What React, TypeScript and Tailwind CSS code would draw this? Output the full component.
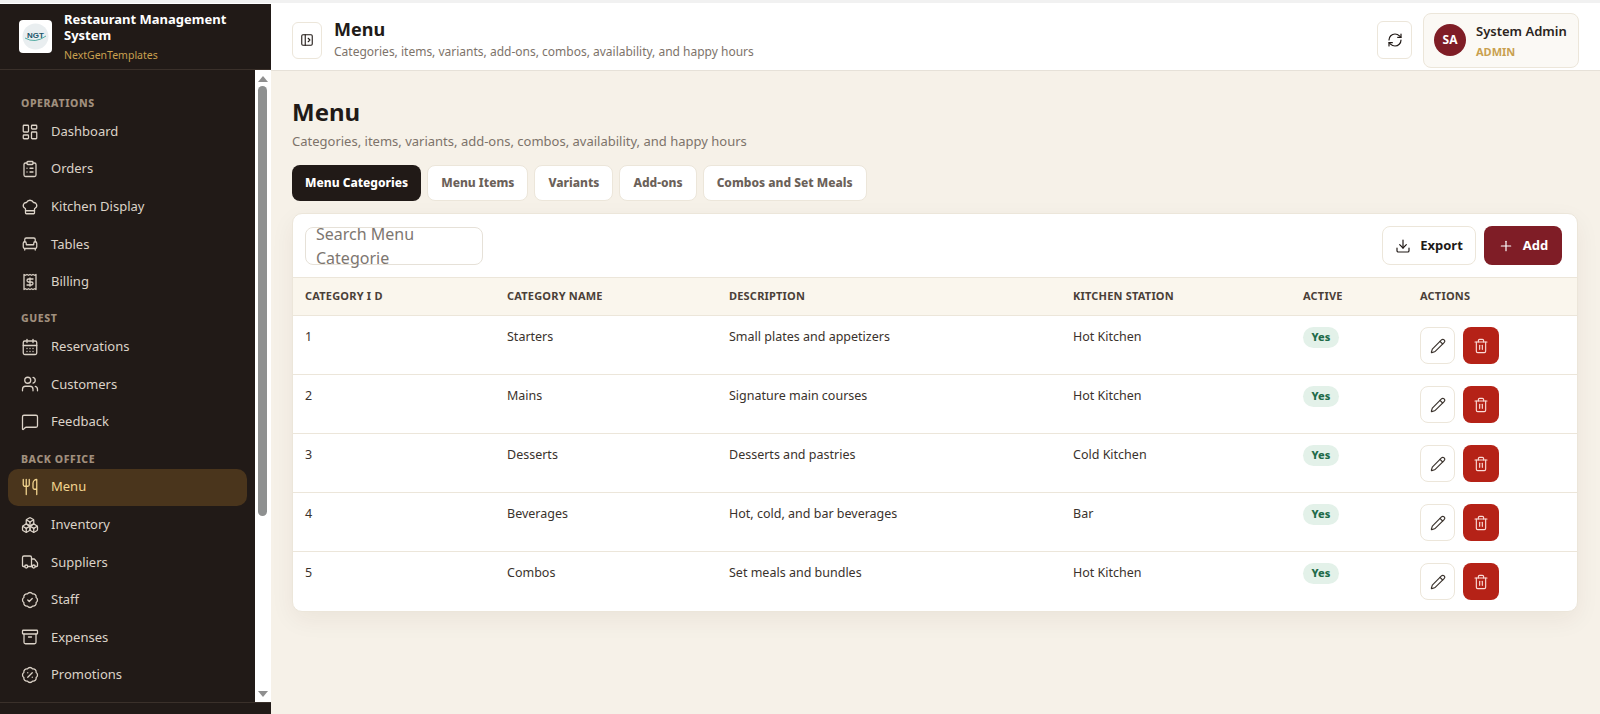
import React from "react";
import { LayoutDashboard, ClipboardList, ChefHat, Armchair, Receipt, CalendarDays, Users, MessageSquare, Utensils, Boxes, Truck, BadgeCheck, Archive, BadgePercent, PanelLeftOpen, RefreshCw, Download, Plus, Pencil, Trash2 } from "lucide-react";

const ic = "w-[18px] h-[18px] shrink-0";
type Item = { label: string; Icon: React.ComponentType<any>; active?: boolean };
const groups: { title: string; items: Item[] }[] = [
  { title: "OPERATIONS", items: [
    { label: "Dashboard", Icon: LayoutDashboard },
    { label: "Orders", Icon: ClipboardList },
    { label: "Kitchen Display", Icon: ChefHat },
    { label: "Tables", Icon: Armchair },
    { label: "Billing", Icon: Receipt },
  ]},
  { title: "GUEST", items: [
    { label: "Reservations", Icon: CalendarDays },
    { label: "Customers", Icon: Users },
    { label: "Feedback", Icon: MessageSquare },
  ]},
  { title: "BACK OFFICE", items: [
    { label: "Menu", Icon: Utensils, active: true },
    { label: "Inventory", Icon: Boxes },
    { label: "Suppliers", Icon: Truck },
    { label: "Staff", Icon: BadgeCheck },
    { label: "Expenses", Icon: Archive },
    { label: "Promotions", Icon: BadgePercent },
  ]},
];
const tabs = ["Menu Categories", "Menu Items", "Variants", "Add-ons", "Combos and Set Meals"];
const rows = [
  ["1", "Starters", "Small plates and appetizers", "Hot Kitchen"],
  ["2", "Mains", "Signature main courses", "Hot Kitchen"],
  ["3", "Desserts", "Desserts and pastries", "Cold Kitchen"],
  ["4", "Beverages", "Hot, cold, and bar beverages", "Bar"],
  ["5", "Combos", "Set meals and bundles", "Hot Kitchen"],
];
const heads = ["CATEGORY I D", "CATEGORY NAME", "DESCRIPTION", "KITCHEN STATION", "ACTIVE", "ACTIONS"];

function Logo() {
  return (
    <div className="w-[33px] h-[33px] rounded-[4px] bg-white flex items-center justify-center shrink-0">
      <svg viewBox="0 0 33 33" className="w-[33px] h-[33px]">
        <circle cx="16.5" cy="16.5" r="13" fill="#e9eef0" />
        <text x="16.5" y="18" textAnchor="middle" fontSize="8" fontWeight="800" fill="#20566b" fontFamily="Liberation Sans, sans-serif">NGT</text>
        <path d="M6 18 Q16 24 27 16" fill="none" stroke="#2f9a8f" strokeWidth="0.8" />
      </svg>
    </div>
  );
}

export default function App() {
  return (
    <div className="h-screen w-full overflow-hidden flex flex-col bg-white text-[#211a17] font-['Noto_Sans',sans-serif]">
      <div className="h-1 shrink-0 bg-white border-t-[3px] border-[#f1f1f1]" />
      <div className="flex flex-1 min-h-0">
        <aside className="w-[271px] shrink-0 bg-[#211a17] flex flex-col">
          <div className="h-[66px] shrink-0 flex items-center gap-[12px] pl-[19px] border-b border-[#3a302a]">
            <Logo />
            <div className="flex flex-col">
              <div className="text-[13px] leading-[16px] font-bold text-white w-[180px]">Restaurant Management System</div>
              <div className="text-[10.5px] leading-[14px] mt-[5px] text-[#c9a04f]">NextGenTemplates</div>
            </div>
          </div>
          <div className="flex flex-1 min-h-0">
            <nav className="w-[255px] overflow-hidden pt-[25px] px-[8px]">
              {groups.map((g, gi) => (
                <div key={g.title} className={gi ? "mt-[10px]" : ""}>
                  <div className="h-[16px] leading-[16px] pl-[13px] text-[10.5px] font-extrabold tracking-[0.6px] text-[#a08f7d]">{g.title}</div>
                  <div className="mt-[2px] flex flex-col gap-[0.6px]">
                    {g.items.map(({ label, Icon, active }) => (
                      <div key={label} className={`h-[37px] rounded-[10px] flex items-center gap-[12px] pl-[13px] text-[13px] ${active ? "bg-[#4a351c] text-[#f3d58f]" : "text-[#dcd3c8]"}`}>
                        <Icon className={ic} strokeWidth={1.7} />
                        <span>{label}</span>
                      </div>
                    ))}
                  </div>
                </div>
              ))}
            </nav>
            <div className="w-[16px] bg-white flex flex-col items-center pr-[1px]">
              <div className="mt-[6px] w-0 h-0 border-x-[5px] border-x-transparent border-b-[6px] border-b-[#8f8f8f]" />
              <div className="mt-[4px] w-[9px] h-[430px] rounded-[5px] bg-[#8e9090]" />
              <div className="mt-auto mb-[5px] w-0 h-0 border-x-[5px] border-x-transparent border-t-[6px] border-t-[#8f8f8f]" />
            </div>
          </div>
          <div className="h-[12px] shrink-0 border-t border-[#3a302a]" />
        </aside>
        <div className="flex-1 min-w-0 flex flex-col bg-[#f6f1e8]">
          <header className="h-[67px] shrink-0 bg-white border-b border-[#e6e1d8] flex items-center pl-[21px] pr-[21px]">
            <button className="w-[30px] h-[37px] mt-[6px] rounded-[6px] border border-[#ece6da] bg-white flex items-center justify-center">
              <PanelLeftOpen className="w-[14px] h-[14px]" strokeWidth={1.9} />
            </button>
            <div className="ml-[12px] mt-[2px]">
              <div className="text-[18px] leading-[24px] font-bold">Menu</div>
              <div className="text-[12px] leading-[16px] mt-[3px] text-[#7d736a]">Categories, items, variants, add-ons, combos, availability, and happy hours</div>
            </div>
            <button className="ml-auto w-[35px] h-[38px] mt-[6px] rounded-[6px] border border-[#ece6da] bg-white flex items-center justify-center">
              <RefreshCw className="w-[16px] h-[16px]" strokeWidth={1.8} />
            </button>
            <div className="ml-[11px] w-[156px] h-[55px] mt-[6px] rounded-[8px] border border-[#ece6da] bg-[#fbf9f5] flex items-center pl-[10px]">
              <div className="w-[32px] h-[32px] rounded-full bg-[#7f1d26] text-white text-[12px] font-bold flex items-center justify-center">SA</div>
              <div className="ml-[10px]">
                <div className="text-[13px] leading-[18px] font-semibold text-[#2b2420]">System Admin</div>
                <div className="text-[11px] leading-[14px] mt-[5px] font-bold text-[#c9a04f]">ADMIN</div>
              </div>
            </div>
          </header>
          <main className="flex-1 min-h-0 pl-[21px] pr-[22px] pt-[25px]">
            <h1 className="text-[24px] leading-[32px] font-bold">Menu</h1>
            <p className="text-[13px] leading-[18px] mt-[4px] text-[#7d736a]">Categories, items, variants, add-ons, combos, availability, and happy hours</p>
            <div className="flex gap-[6px] mt-[15px]">
              {tabs.map((t, i) => (
                <div key={t} className={`h-[36px] px-[13px] rounded-[8px] flex items-center text-[12px] font-extrabold ${i === 0 ? "bg-[#211a17] text-white" : "bg-white border border-[#ece6da] text-[#6b6159]"}`}>{t}</div>
              ))}
            </div>
            <section className="mt-[12px] bg-white rounded-[10px] border border-[#ece6da] shadow-[0_8px_24px_rgba(60,40,20,0.06)] overflow-hidden">
              <div className="h-[63px] flex items-center pl-[12px] pr-[15px]">
                <div className="w-[178px] h-[38px] rounded-[8px] border border-[#e6e1d8] flex items-center pl-[10px] text-[16px] text-[#7d7670]">Search Menu Categorie</div>
                <button className="ml-auto w-[94px] h-[39px] rounded-[8px] border border-[#ece6da] bg-white flex items-center justify-center gap-[9px] text-[13px] font-bold">
                  <Download className="w-[16px] h-[16px]" strokeWidth={1.8} />Export
                </button>
                <button className="ml-[8px] w-[78px] h-[39px] rounded-[8px] bg-[#7f1d26] text-white flex items-center justify-center gap-[9px] text-[13px] font-bold">
                  <Plus className="w-[16px] h-[16px]" strokeWidth={1.8} />Add
                </button>
              </div>
              <table className="w-full table-fixed border-collapse">
                <colgroup>
                  <col className="w-[202px]" /><col className="w-[222px]" /><col className="w-[344px]" /><col className="w-[230px]" /><col className="w-[117px]" /><col />
                </colgroup>
                <thead>
                  <tr className="h-[38px] bg-[#faf6ed] border-y border-[#ece6da]">
                    {heads.map((h) => (
                      <th key={h} className="text-left pl-[12px] text-[11px] font-bold tracking-[0.2px] text-[#4a4038]">{h}</th>
                    ))}
                  </tr>
                </thead>
                <tbody>
                  {rows.map((r, ri) => (
                    <tr key={r[0]} className={`h-[59px] text-[12.5px] text-[#3a322c] ${ri < 4 ? "border-b border-[#ece6da]" : ""}`}>
                      {r.map((c, i) => (
                        <td key={i} className="pl-[12px] align-top pt-[12px] leading-[18px]">{c}</td>
                      ))}
                      <td className="pl-[12px] align-top pt-[11px]">
                        <span className="inline-flex items-center justify-center w-[36px] h-[21px] rounded-full bg-[#e3f1e9] text-[#1f6b4a] text-[11px] font-extrabold">Yes</span>
                      </td>
                      <td className="pl-[12px] align-top pt-[11px]">
                        <div className="flex gap-[8px]">
                          <button className="w-[35px] h-[37px] rounded-[8px] border border-[#ece6da] bg-white flex items-center justify-center">
                            <Pencil className="w-[16px] h-[16px]" strokeWidth={1.7} />
                          </button>
                          <button className="w-[36px] h-[37px] rounded-[8px] bg-[#b52217] text-[#fbdcd8] flex items-center justify-center">
                            <Trash2 className="w-[16px] h-[16px]" strokeWidth={1.7} />
                          </button>
                        </div>
                      </td>
                    </tr>
                  ))}
                </tbody>
              </table>
            </section>
          </main>
        </div>
      </div>
    </div>
  );
}
